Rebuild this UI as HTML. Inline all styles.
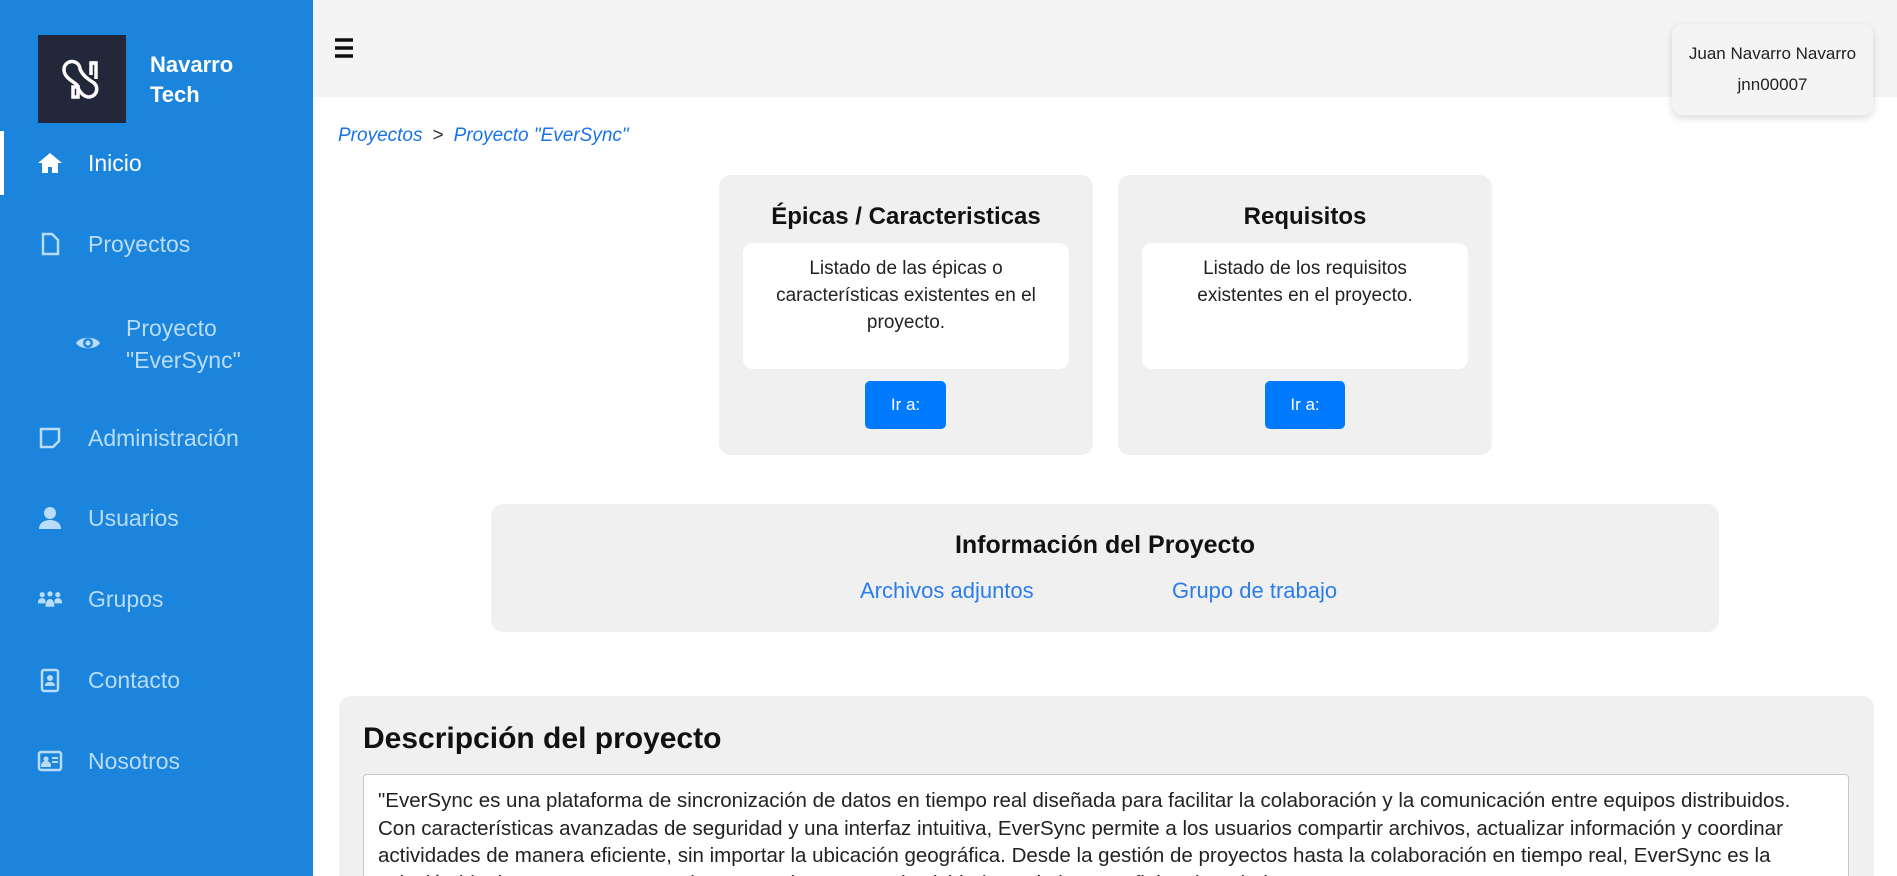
<!DOCTYPE html>
<html style="overflow:hidden;height:876px"><head><meta charset="utf-8"><style>
*{box-sizing:border-box;margin:0;padding:0}
body{width:1897px;height:876px;overflow:hidden;font-family:"Liberation Sans",sans-serif;background:#fff;position:relative;color:#111}
.sb{position:absolute;left:0;top:0;width:313px;height:876px;background:#1b84dc}
.logo{position:absolute;left:38px;top:35px;width:88px;height:88px;background:#22283a}
.brand{position:absolute;left:150px;top:50px;color:#fff;font-weight:bold;font-size:22px;line-height:30px}
.act{position:absolute;left:0;top:131px;width:4px;height:64px;background:#fff}
.it{position:absolute;left:88px;font-size:23px;color:#b9dcf8;line-height:30px}
.ic{position:absolute;left:37px;width:26px;height:26px}
.hdr{position:absolute;left:313px;top:0;width:1584px;height:97px;background:#f4f4f4}
.user{position:absolute;left:1672px;top:24px;width:201px;height:91px;background:#f4f4f4;border-radius:10px;box-shadow:0 3px 8px rgba(0,0,0,.15);text-align:center;font-size:17px;color:#222;line-height:31px;padding-top:14px}
.bc{position:absolute;left:338px;top:125px;font-size:19px;font-style:italic;color:#1a73e8}
.bc span{color:#333;font-style:normal;margin:0 10px}
.card{position:absolute;top:175px;width:374px;height:280px;background:#f0f0f0;border-radius:12px;text-align:center}
.card h3{font-size:24px;margin-top:27px;line-height:30px}
.inner{position:absolute;left:24px;top:68px;width:326px;height:126px;background:#fff;border-radius:10px;font-size:19px;line-height:27px;padding:12px 10px 0;color:#222}
.btn{position:absolute;top:206px;width:81px;height:48px;background:#007bff;border-radius:5px;color:#fff;font-size:17px;line-height:48px}
.info{position:absolute;left:491px;top:504px;width:1228px;height:128px;background:#f0f0f0;border-radius:12px}
.lk{position:absolute;font-size:22px;color:#2b7de9;top:578px}
.desc{position:absolute;left:339px;top:696px;width:1535px;height:200px;background:#f0f0f0;border-radius:12px}
.ta{position:absolute;left:363px;top:774px;width:1486px;height:140px;background:#fff;border:1px solid #c8c8c8;border-radius:4px;padding:12px 14px;font-size:20.5px;line-height:27.7px;color:#222;white-space:nowrap;overflow:hidden}
</style></head><body>
<div class="sb">
 <div class="logo"><svg width="88" height="88" viewBox="0 0 88 88"><g fill="none" stroke="#fff" stroke-width="3.5"><path d="M35 62V52h5v10zM58 28h-5v12"/><path d="M40 52c0-4-14-8-14-17a8 8 0 0 1 16-1c3 7 8 10 14 14a8 8 0 0 1-6 14c-6-1-10-8-10-10"/><path d="M53 28h5v16"/></g></svg></div>
 <div class="brand">Navarro<br>Tech</div>
 <div class="act"></div>
 <svg class="ic" style="top:150px" viewBox="0 0 26 26"><path d="M13 3L1 13h4v10h6v-6h4v6h6V13h4z" fill="#fff"/></svg>
 <div class="it" style="top:148px;color:#fff">Inicio</div>
 <svg class="ic" style="top:231px" viewBox="0 0 26 26"><path d="M6 3h9l6 6v14H6z" fill="none" stroke="#b9dcf8" stroke-width="2.5"/></svg>
 <div class="it" style="top:229px">Proyectos</div>
 <svg class="ic" style="left:75px;top:330px" viewBox="0 0 26 26"><path d="M1 13c4-7 20-7 24 0-4 7-20 7-24 0z" fill="#b9dcf8"/><circle cx="13" cy="13" r="5" fill="#1b84dc"/><circle cx="13" cy="13" r="2.5" fill="#b9dcf8"/></svg>
 <div class="it" style="left:126px;top:312px;line-height:32px">Proyecto<br>"EverSync"</div>
 <svg class="ic" style="top:425px" viewBox="0 0 26 26"><path d="M4 4h18v12l-6 6H4z" fill="none" stroke="#b9dcf8" stroke-width="2.5"/></svg>
 <div class="it" style="top:423px">Administración</div>
 <svg class="ic" style="top:505px" viewBox="0 0 26 26"><circle cx="13" cy="8" r="6" fill="#b9dcf8"/><path d="M2 24c0-6 5-9 11-9s11 3 11 9z" fill="#b9dcf8"/></svg>
 <div class="it" style="top:503px">Usuarios</div>
 <svg class="ic" style="top:586px" viewBox="0 0 30 26"><g fill="#b9dcf8"><circle cx="6" cy="8" r="3"/><circle cx="15" cy="7" r="3"/><circle cx="24" cy="8" r="3"/><path d="M1 18c0-4 2-6 5-6s4 2 4 6zM20 18c0-4 1-6 4-6s5 2 5 6zM10 22c0-6 2-9 5-9s5 3 5 9z"/></g></svg>
 <div class="it" style="top:584px">Grupos</div>
 <svg class="ic" style="top:667px" viewBox="0 0 26 26"><rect x="5" y="3" width="16" height="21" rx="2" fill="none" stroke="#b9dcf8" stroke-width="2.5"/><circle cx="13" cy="11" r="3" fill="#b9dcf8"/><path d="M8 19c0-3 2-4 5-4s5 1 5 4z" fill="#b9dcf8"/></svg>
 <div class="it" style="top:665px">Contacto</div>
 <svg class="ic" style="top:748px" viewBox="0 0 26 26"><rect x="2" y="4" width="22" height="18" rx="2" fill="none" stroke="#b9dcf8" stroke-width="2.5"/><circle cx="9" cy="11" r="2.5" fill="#b9dcf8"/><path d="M5 18c0-3 2-4 4-4s4 1 4 4z M15 10h6M15 14h6" fill="#b9dcf8" stroke="#b9dcf8" stroke-width="2"/></svg>
 <div class="it" style="top:746px">Nosotros</div>
</div>
<div class="hdr"><svg style="position:absolute;left:22px;top:38px" width="20" height="20" viewBox="0 0 20 20"><path d="M0 2h18M0 10h18M0 18h18" stroke="#111" stroke-width="3.5"/></svg></div>
<div class="user">Juan Navarro Navarro<br>jnn00007</div>
<div class="bc">Proyectos<span>&gt;</span>Proyecto "EverSync"</div>
<div class="card" style="left:719px"><h3>Épicas / Caracteristicas</h3><div class="inner">Listado de las épicas o características existentes en el proyecto.</div><div class="btn" style="left:146px">Ir a:</div></div>
<div class="card" style="left:1118px"><h3>Requisitos</h3><div class="inner" style="padding:12px 40px 0">Listado de los requisitos existentes en el proyecto.</div><div class="btn" style="left:147px;width:80px">Ir a:</div></div>
<div class="info"></div>
<div style="position:absolute;left:491px;width:1228px;top:531px;text-align:center;font-size:25px;font-weight:bold">Información del Proyecto</div>
<div class="lk" style="left:860px">Archivos adjuntos</div>
<div class="lk" style="left:1172px">Grupo de trabajo</div>
<div class="desc"></div>
<div style="position:absolute;left:363px;top:722px;font-size:30px;font-weight:bold">Descripción del proyecto</div>
<div class="ta">"EverSync es una plataforma de sincronización de datos en tiempo real diseñada para facilitar la colaboración y la comunicación entre equipos distribuidos.<br>Con características avanzadas de seguridad y una interfaz intuitiva, EverSync permite a los usuarios compartir archivos, actualizar información y coordinar<br>actividades de manera eficiente, sin importar la ubicación geográfica. Desde la gestión de proyectos hasta la colaboración en tiempo real, EverSync es la<br>solución ideal para empresas que buscan mejorar su productividad y optimizar sus flujos de trabajo."</div>
</body></html>
